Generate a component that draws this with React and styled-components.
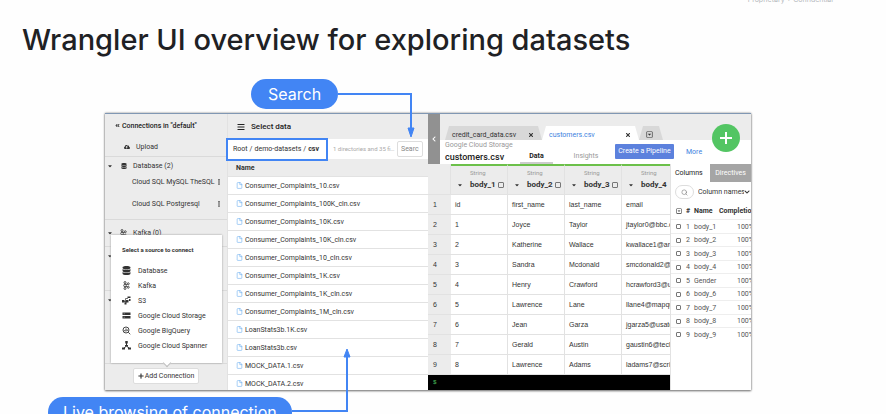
import React from "react";
import styled, { createGlobalStyle, css } from "styled-components";
import {
  FaAngleDoubleLeft,
  FaBars,
  FaCaretDown,
  FaChevronDown,
  FaChevronLeft,
  FaCloudUploadAlt,
  FaDatabase,
  FaEllipsisV,
  FaPlus,
  FaRegCaretSquareDown,
  FaTimes,
} from "react-icons/fa";
import { FiFile, FiSearch } from "react-icons/fi";

const blue = "#4285f4";
const line = "#e2e2e2";
const grey = "#ececec";

const GlobalStyle = createGlobalStyle`
  * { box-sizing: border-box; }
  body {
    margin: 0;
    background: #fefefe;
    color: #333;
    font: 7px/10px Roboto, "Liberation Sans", sans-serif;
  }
  button, input, select { font: inherit; color: inherit; margin: 0; padding: 0; }
  button { border: 0; background: none; cursor: pointer; white-space: nowrap; }
  a { color: inherit; text-decoration: none; }
  ul { list-style: none; margin: 0; padding: 0; }
  h1, h2, h3, p { margin: 0; }
  svg { display: block; flex: none; }
  table { border-collapse: separate; border-spacing: 0; }
  th, td { padding: 0; text-align: left; white-space: nowrap; }
`;

const Slide = styled.main`
  height: 100vh;
  overflow: hidden;
  display: flex;
  flex-direction: column;
`;

const Notice = styled.div`
  flex: none;
  height: 4px;
  padding-right: 53px;
  display: flex;
  justify-content: flex-end;
  align-items: flex-end;
  overflow: hidden;
  font: 7px/8px Inter, sans-serif;
  color: #b4b8bc;
`;

const Title = styled.h1`
  flex: none;
  padding: 16px 22px 19px;
  font: 500 29px/40px Inter, sans-serif;
  color: #202124;
`;

const Callout = styled.div`
  position: relative;
  z-index: 2;
  align-self: flex-start;
  flex: none;
  margin-left: ${(p) => p.$indent}px;
  padding: 0 ${(p) => p.$pad}px;
  border-radius: 15px;
  background: ${blue};
  color: #fff;
  font: 400 16px/30px Inter, sans-serif;
  white-space: nowrap;
`;

const Connector = styled.svg`
  position: absolute;
  left: 100%;
  ${(p) => (p.$up ? "bottom: 15px;" : "top: 14px;")}
  fill: none;
  stroke: ${blue};
`;

const Panel = styled.section`
  flex: none;
  margin: 4px 135px 7px 105px;
  display: grid;
  grid-template-columns: 123px 200px minmax(0, 1fr);
  border-top: 1px solid #8097b3;
  box-shadow: 0 1px 2px #777, 0 0 2px #999;
  background: #fff;
`;

const Sidebar = styled.aside`
  display: flex;
  flex-direction: column;
  background: ${grey};
  border-right: 1px solid ${line};
`;

const SidebarTitle = styled.h2`
  display: flex;
  align-items: center;
  gap: 2px;
  height: 23px;
  padding-left: 10px;
  font: 500 7px/10px Roboto, sans-serif;
  color: #222;
`;

const Upload = styled.button`
  display: flex;
  align-items: center;
  gap: 6px;
  height: 19px;
  padding-left: 19px;
`;

const Group = styled.section`
  display: flex;
  flex-direction: column;
  min-height: ${(p) => p.$height}px;
  border-top: 1px solid #dadada;
`;

const GroupHead = styled.button`
  display: flex;
  align-items: center;
  height: ${(p) => (p.$tall ? 26 : 18)}px;
  padding-left: 2px;
`;

const HeadIcon = styled.span`
  display: flex;
  justify-content: center;
  width: 9px;
  margin: 0 5px 0 6px;
`;

const Connections = styled.ul`
  display: flex;
  flex-direction: column;
  gap: 8px;
  padding: 0 5px 6px 27px;
`;

const Connection = styled.li`
  display: flex;
  align-items: center;
  justify-content: space-between;
  height: 14px;
  white-space: nowrap;
`;

const SidebarFoot = styled.footer`
  position: relative;
  flex: 1;
  display: flex;
  justify-content: center;
  align-items: flex-start;
  padding-top: 4px;
  border-top: 1px solid #dadada;
`;

const AddButton = styled.button`
  display: flex;
  align-items: center;
  gap: 1px;
  padding: 2px 4px;
  border: 1px solid #ddd;
  border-radius: 2px;
  background: #fff;
`;

const Popover = styled.div`
  position: absolute;
  bottom: calc(100% + 1px);
  left: 6px;
  right: 5px;
  padding: 10px 10px 10px 11px;
  background: #fff;
  box-shadow: 0 0 2px #999;

  &::after {
    content: "";
    position: absolute;
    bottom: -3px;
    left: 50%;
    width: 5px;
    height: 5px;
    background: #fff;
    border: solid #bbb;
    border-width: 0 1px 1px 0;
    transform: translateX(-50%) rotate(45deg);
  }
`;

const PopoverTitle = styled.h3`
  margin-bottom: 8px;
  font: 700 6px/10px Roboto, sans-serif;
`;

const Source = styled.button`
  display: grid;
  grid-template-columns: 11px auto;
  align-items: center;
  gap: 5px;
  height: 15px;
`;

const SourceIcon = styled.svg`
  width: 9px;
  height: 9px;
  fill: #333;
  stroke: #333;
`;

const Browser = styled.section`
  display: flex;
  flex-direction: column;
  min-width: 0;
`;

const BrowserTitle = styled.header`
  display: flex;
  align-items: center;
  gap: 6px;
  height: 25px;
  padding-left: 9px;
  background: ${grey};
  font: 500 8px/12px Roboto, sans-serif;
  color: #222;
`;

const PathBar = styled.div`
  display: flex;
  align-items: center;
  height: 20px;
`;

const Path = styled.nav`
  position: relative;
  z-index: 1;
  display: flex;
  align-items: center;
  gap: 2px;
  width: 102px;
  height: 23px;
  margin-left: -2px;
  padding-left: 5px;
  border: 2px solid ${blue};
  background: #fff;
`;

const Count = styled.span`
  flex: 1;
  min-width: 0;
  margin: 0 1px 0 5px;
  overflow: hidden;
  text-overflow: ellipsis;
  white-space: nowrap;
  font-size: 6px;
  color: #aaa;
`;

const SearchBox = styled.input`
  width: 26px;
  height: 16px;
  margin-right: 5px;
  padding: 0 3px;
  border: 1px solid #ddd;
  border-radius: 2px;
  outline: 0;

  &::placeholder { color: #888; opacity: 1; }
`;

const NameHeading = styled.div`
  height: 18px;
  padding-left: 8px;
  background: ${grey};
  border-bottom: 1px solid ${line};
  font-weight: 700;
  line-height: 18px;
`;

const Files = styled.ul`
  flex: 1 1 0;
  height: 0;
  overflow: hidden;
`;

const File = styled.a`
  display: flex;
  align-items: center;
  gap: 2px;
  height: 18px;
  padding-left: 8px;
  border-bottom: 1px solid ${line};

  svg { color: #6aaef0; }
`;

const Workspace = styled.section`
  display: flex;
  flex-direction: column;
  min-width: 0;
  overflow: hidden;
`;

const Top = styled.header`
  display: grid;
  grid-template-columns: 12px minmax(0, 1fr);
  height: 50px;
`;

const Collapse = styled.button`
  display: flex;
  align-items: center;
  justify-content: center;
  background: #919191;
  color: #fff;
`;

const Heading = styled.div`
  position: relative;
  display: flex;
  flex-direction: column;
`;

const Tabs = styled.div`
  display: flex;
  height: 26px;
  padding: 12px 0 0 5px;
  background: ${grey};
`;

const Tab = styled.div`
  display: flex;
  align-items: center;
  justify-content: space-between;
  width: ${(p) => p.$width}px;
  padding: 3px 8px 0 7px;
  background: ${(p) => (p.$active ? "#fff" : "#d8d8d8")};
  clip-path: polygon(4px 0, calc(100% - 4px) 0, 100% 100%, 0 100%);

  a { color: ${(p) => (p.$active ? "#3c7fe0" : "#333")}; }
`;

const FileBar = styled.div`
  display: grid;
  grid-template-columns: 71px 41px 1fr 59px 77px;
  align-items: end;
  height: 24px;
  padding-left: 5px;
`;

const FileInfo = styled.div`
  align-self: start;
  color: #999;
  white-space: nowrap;

  h2 { font: 500 9px/14px Roboto, sans-serif; color: #222; }
`;

const ViewTab = styled.a`
  justify-self: center;
  padding: 0 9px 1px;
  font-weight: ${(p) => (p.$active ? 700 : 400)};
  color: ${(p) => (p.$active ? "#222" : "#999")};
  border-bottom: 2px solid ${(p) => (p.$active ? "#ccc" : "transparent")};
`;

const Pipeline = styled.button`
  align-self: start;
  margin-top: 4px;
  padding: 2px 0;
  border-radius: 1px;
  background: #5c81dd;
  color: #fff;
  line-height: 11px;
`;

const More = styled.a`
  align-self: start;
  margin: 7px 0 0 12px;
  color: #3c7fe0;
`;

const AddStep = styled.button`
  position: absolute;
  top: 10px;
  right: 11px;
  display: flex;
  align-items: center;
  justify-content: center;
  width: 28px;
  height: 28px;
  border-radius: 50%;
  background: #53c563;
`;

const Body = styled.div`
  display: grid;
  grid-template-columns: minmax(0, 1fr) 81px;
`;

const DataSide = styled.div`
  overflow: hidden;
`;

const DataTable = styled.table`
  width: 251px;
  table-layout: fixed;
  font-family: "Liberation Sans", Arial, sans-serif;

  td, tbody th {
    height: 20px;
    padding-left: 4px;
    border: solid ${line};
    border-width: 0 1px 1px 0;
    overflow: hidden;
  }
  tbody th { background: ${grey}; font-weight: 400; border-right: 0; padding-left: 5px; }
`;

const ColumnHead = styled.th`
  height: 31px;
  background: ${grey};
  border: solid ${line};
  border-width: 0 1px 1px 0;
  ${(p) => p.$named && css`border-top: 2px solid #6cc04a; width: 57px;`}
  ${(p) => !p.$named && css`width: 23px;`}
  font-family: Roboto, sans-serif;
  vertical-align: top;
`;

const ColumnType = styled.div`
  margin-top: 3px;
  padding-left: 19px;
  font: 400 6px/8px Roboto, sans-serif;
  color: #999;
`;

const ColumnName = styled.label`
  display: grid;
  grid-template-columns: 6px auto 6px;
  align-items: center;
  justify-content: start;
  gap: 2px;
  padding: 2px 0 0 6px;
  font: 700 8px/12px Roboto, sans-serif;

  span { padding-left: 5px; }
`;

const Check = styled.input.attrs({ type: "checkbox" })`
  appearance: none;
  display: block;
  width: ${(p) => p.$size}px;
  height: ${(p) => p.$size}px;
  border: 1px solid #777;
  border-radius: 1px;
`;

const Terminal = styled.div`
  height: 15px;
  padding-left: 5px;
  background: #000;
  color: #3ea14b;
  font: 700 6px/15px "Liberation Mono", monospace;
`;

const SidePanel = styled.aside`
  border-left: 1px solid ${line};
  background: #fff;
  overflow: hidden;
`;

const SideTabs = styled.div`
  display: grid;
  grid-template-columns: 39px 1fr;
`;

const SideTab = styled.button`
  height: 18px;
  padding-left: ${(p) => (p.$dark ? 0 : 4)}px;
  text-align: ${(p) => (p.$dark ? "center" : "left")};
  background: ${(p) => (p.$dark ? "#a5a5a5" : "#fff")};
  color: ${(p) => (p.$dark ? "#fff" : "#222")};
`;

const Filter = styled.div`
  display: grid;
  grid-template-columns: 19px 1fr;
  align-items: center;
  gap: 4px;
  height: 20px;
  padding-left: 4px;
`;

const FilterSearch = styled.label`
  display: flex;
  align-items: center;
  justify-content: center;
  height: 14px;
  border: 1px solid #ddd;
  border-radius: 7px;
  color: #777;

  input { width: 0; border: 0; outline: 0; }
`;

const FilterSelect = styled.div`
  display: flex;
  align-items: center;

  select { appearance: none; border: 0; background: none; outline: 0; width: 46px; }
`;

const Summary = styled.table`
  width: 92px;
  table-layout: fixed;

  th { height: 17px; font-weight: 700; }
  td { height: 14px; border-top: 1px solid #eee; color: #555; }
  tr:nth-child(even) td { height: 13px; }
  th:first-child, td:first-child { width: 15px; padding-left: 5px; }
  th:nth-child(2), td:nth-child(2) { width: 8px; }
  th:nth-child(3), td:nth-child(3) { width: 25px; }
  td:last-child { padding-left: 18px; }
`;

const KafkaIcon = () => (
  <SourceIcon viewBox="0 0 18 18" strokeWidth="1.6">
    <path d="M6 4v10M6 9l6-4M6 9l6 4" fill="none" />
    <g fill="#eee">
      <circle cx="6" cy="3" r="2" />
      <circle cx="6" cy="9" r="2.6" />
      <circle cx="6" cy="15" r="2" />
      <circle cx="12.5" cy="5.5" r="2" />
      <circle cx="12.5" cy="12.5" r="2" />
    </g>
  </SourceIcon>
);

const icons = {
  Database: <FaDatabase size={9} />,
  Kafka: <KafkaIcon />,
  S3: (
    <SourceIcon viewBox="0 0 18 18" strokeWidth="1.4">
      <path d="M3 11h8M7 11V5h5M7 14v-3" fill="none" />
      <path d="M0 8h5v5H0zM5 13h4v4H5zM8 8h5v5H8zM11 1h6v3h-6zM14 6h3v4h-3z" stroke="none" />
    </SourceIcon>
  ),
  "Google Cloud Storage": (
    <SourceIcon viewBox="0 0 18 18">
      <path d="M1 3h16v5H1zM1 10h16v5H1z" stroke="none" />
      <path d="M3 5.5h3M3 12.5h3" stroke="#bbb" />
    </SourceIcon>
  ),
  "Google BigQuery": (
    <SourceIcon viewBox="0 0 18 18" strokeWidth="1.8">
      <circle cx="8" cy="8" r="6" fill="none" />
      <path d="M5.5 8v2.5M8 5v6M10.5 7v3M12.5 12.5l4 4" fill="none" />
    </SourceIcon>
  ),
  "Google Cloud Spanner": (
    <SourceIcon viewBox="0 0 18 18" strokeWidth="2">
      <path d="M9 4v6M9 10l-6 5M9 10l6 5" fill="none" />
      <path d="M6.5 0h5v5h-5zM6 8h6v3H6zM0 13h6v4H0zM12 13h6v4h-6z" stroke="none" />
    </SourceIcon>
  ),
};

const files = [
  "Consumer_Complaints_10.csv",
  "Consumer_Complaints_100K_cln.csv",
  "Consumer_Complaints_10K.csv",
  "Consumer_Complaints_10K_cln.csv",
  "Consumer_Complaints_10_cln.csv",
  "Consumer_Complaints_1K.csv",
  "Consumer_Complaints_1K_cln.csv",
  "Consumer_Complaints_1M_cln.csv",
  "LoanStats3b.1K.csv",
  "LoanStats3b.csv",
  "MOCK_DATA.1.csv",
  "MOCK_DATA.2.csv",
];

const rows = [
  ["id", "first_name", "last_name", "email"],
  ["1", "Joyce", "Taylor", "jtaylor0@bbc.co.uk"],
  ["2", "Katherine", "Wallace", "kwallace1@archive.org"],
  ["3", "Sandra", "Mcdonald", "smcdonald2@example.com"],
  ["4", "Henry", "Crawford", "hcrawford3@umn.edu"],
  ["5", "Lawrence", "Lane", "llane4@mapquest.com"],
  ["6", "Jean", "Garza", "jgarza5@usatoday.com"],
  ["7", "Gerald", "Austin", "gaustin6@techcrunch.com"],
  ["8", "Lawrence", "Adams", "ladams7@scribd.com"],
];

const fields = ["body_1", "body_2", "body_3", "body_4", "Gender", "body_6", "body_7", "body_8", "body_9"];

function ConnectionsSidebar() {
  return (
    <Sidebar>
      <SidebarTitle><FaAngleDoubleLeft size={5} />Connections in "default"</SidebarTitle>
      <Upload><FaCloudUploadAlt size={6} />Upload</Upload>
      <Group $height={63}>
        <GroupHead>
          <FaCaretDown size={6} />
          <HeadIcon><FaDatabase size={6} /></HeadIcon>
          Database (2)
        </GroupHead>
        <Connections>
          <Connection>Cloud SQL MySQL TheSQL<FaEllipsisV size={6} /></Connection>
          <Connection>Cloud SQL Postgresql<FaEllipsisV size={6} /></Connection>
        </Connections>
      </Group>
      <Group $height={27}>
        <GroupHead $tall>
          <FaCaretDown size={6} />
          <HeadIcon><KafkaIcon /></HeadIcon>
          Kafka (0)
        </GroupHead>
      </Group>
      <Group $height={44}><GroupHead aria-label="S3"><FaCaretDown size={6} /></GroupHead></Group>
      <Group $height={73}><GroupHead aria-label="Google Cloud Storage"><FaCaretDown size={6} /></GroupHead></Group>
      <SidebarFoot>
        <Popover>
          <PopoverTitle>Select a source to connect</PopoverTitle>
          {Object.entries(icons).map(([name, icon]) => (
            <Source key={name}>{icon}{name}</Source>
          ))}
        </Popover>
        <AddButton><FaPlus size={6} />Add Connection</AddButton>
      </SidebarFoot>
    </Sidebar>
  );
}

function FileBrowser() {
  return (
    <Browser>
      <BrowserTitle><FaBars size={8} /><span>Select data</span></BrowserTitle>
      <PathBar>
        <Path>
          <a href="#root">Root</a><span>/</span>
          <a href="#demo">demo-datasets</a><span>/</span>
          <b>csv</b>
        </Path>
        <Count>1 directories and 35 files</Count>
        <SearchBox aria-label="Search files" placeholder="Searc" />
      </PathBar>
      <NameHeading>Name</NameHeading>
      <Files>
        {files.map((name) => (
          <li key={name}><File href="#file"><FiFile size={7} />{name}</File></li>
        ))}
      </Files>
    </Browser>
  );
}

function DataWorkspace() {
  return (
    <Workspace>
      <Top>
        <Collapse aria-label="Collapse"><FaChevronLeft size={6} /></Collapse>
        <Heading>
          <Tabs>
            <Tab $width={97}><a href="#credit">credit_card_data.csv</a><FaTimes size={6} /></Tab>
            <Tab $width={97} $active><a href="#customers">customers.csv</a><FaTimes size={6} /></Tab>
            <Tab $width={24}><FaRegCaretSquareDown size={7} /></Tab>
          </Tabs>
          <FileBar>
            <FileInfo><p>Google Cloud Storage</p><h2>customers.csv</h2></FileInfo>
            <ViewTab href="#data" $active>Data</ViewTab>
            <ViewTab href="#insights">Insights</ViewTab>
            <Pipeline>Create a Pipeline</Pipeline>
            <More href="#more">More</More>
          </FileBar>
          <AddStep aria-label="Add">
            <svg width="14" height="14" viewBox="0 0 14 14" stroke="#fff" strokeWidth="2">
              <path d="M7 1v12M1 7h12" />
            </svg>
          </AddStep>
        </Heading>
      </Top>
      <Body>
        <DataSide>
          <DataTable>
            <thead>
              <tr>
                <ColumnHead />
                {fields.slice(0, 4).map((name, i) => (
                  <ColumnHead key={name} $named>
                    <ColumnType>String</ColumnType>
                    <ColumnName>
                      <FaCaretDown size={6} /><span>{name}</span>{i < 3 && <Check $size={6} />}
                    </ColumnName>
                  </ColumnHead>
                ))}
              </tr>
            </thead>
            <tbody>
              {rows.map((row, i) => (
                <tr key={i}>
                  <th>{i + 1}</th>
                  {row.map((cell, j) => <td key={j}>{cell}</td>)}
                </tr>
              ))}
            </tbody>
          </DataTable>
          <Terminal>$</Terminal>
        </DataSide>
        <SidePanel>
          <SideTabs><SideTab>Columns</SideTab><SideTab $dark>Directives</SideTab></SideTabs>
          <Filter>
            <FilterSearch><FiSearch size={7} /><input aria-label="Search columns" /></FilterSearch>
            <FilterSelect>
              <select aria-label="Match by"><option>Column names</option></select>
              <FaChevronDown size={6} />
            </FilterSelect>
          </Filter>
          <Summary>
            <thead>
              <tr><th><FaRegCaretSquareDown size={6} /></th><th>#</th><th>Name</th><th>Completion</th></tr>
            </thead>
            <tbody>
              {fields.map((name, i) => (
                <tr key={name}>
                  <td><Check $size={5} aria-label={name} /></td>
                  <td>{i + 1}</td><td>{name}</td><td>100%</td>
                </tr>
              ))}
            </tbody>
          </Summary>
        </SidePanel>
      </Body>
    </Workspace>
  );
}

export default function App() {
  return (
    <>
      <GlobalStyle />
      <Slide>
        <Notice>Proprietary + Confidential</Notice>
        <Title>Wrangler UI overview for exploring datasets</Title>
        <Callout $indent={251} $pad={17}>
          Search
          <Connector width="77" height="45">
            <path d="M0 1H73V36" strokeWidth="2" />
            <path d="M70 35h6l-3 9z" fill={blue} />
          </Connector>
        </Callout>
        <Panel>
          <ConnectionsSidebar />
          <FileBrowser />
          <DataWorkspace />
        </Panel>
        <Callout $indent={48} $pad={15}>
          Live browsing of connection
          <Connector $up width="61" height="65">
            <path d="M0 64H55V9" strokeWidth="2" />
            <path d="M52 10h6l-3-8z" fill={blue} />
          </Connector>
        </Callout>
      </Slide>
    </>
  );
}
